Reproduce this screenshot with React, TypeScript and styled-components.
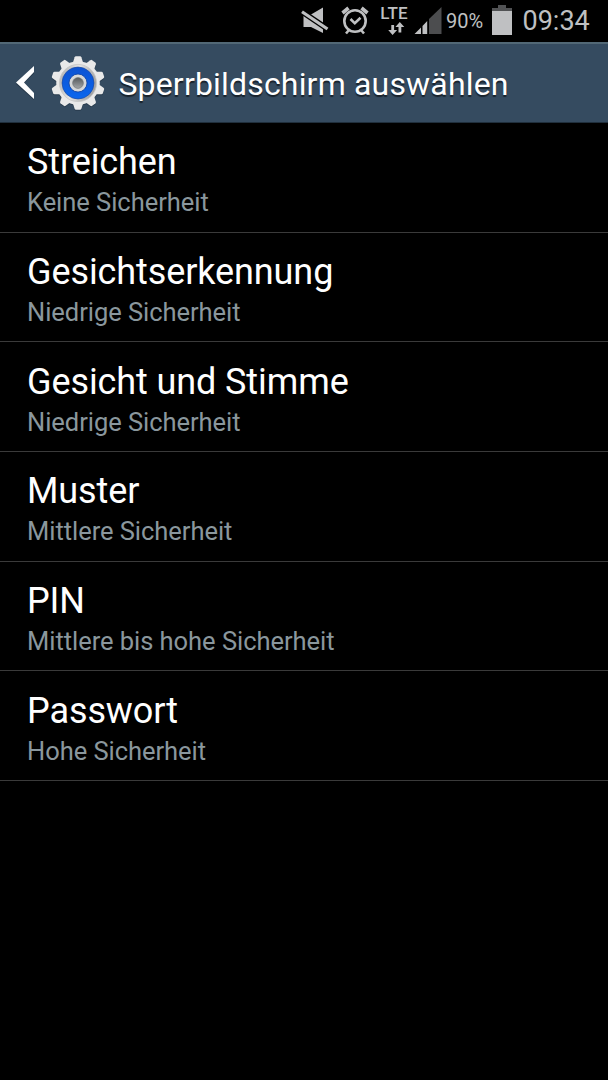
import React from 'react';
import styled, { createGlobalStyle } from 'styled-components';

const Global = createGlobalStyle`
  * { box-sizing: border-box; }
  body { margin: 0; background: #000; font-family: Roboto, "Noto Sans", sans-serif; }
`;
const Screen = styled.div`
  width: 608px; height: 1080px; overflow: hidden; background: #000; color: #fff;
`;
const StatusBar = styled.header`
  display: flex; align-items: flex-start; height: 42px; padding-left: 300px; color: #bfc0c2;
`;
const StatusIcon = styled.svg<{ $w: number; $gap?: number }>`
  display: block; flex: none; width: ${p => p.$w}px; height: 42px; margin-left: ${p => p.$gap ?? 0}px;
`;
const Network = styled.div`
  width: 36px; display: flex; flex-direction: column; align-items: center; padding-top: 5px;
  font-size: 17px; line-height: 17px; font-weight: 500; letter-spacing: 0.1px; margin-left: 5px;
`;
const Arrows = styled.svg`display: block; width: 18px; height: 14px; margin-left: 4px;`;
const Battery = styled.span`font-size: 20px; line-height: 43px; margin-left: 4px; width: 41px; white-space: nowrap;`;
const Clock = styled.span`font-size: 27px; line-height: 43px; margin-left: 9.5px; white-space: nowrap;`;
const TitleBar = styled.div`
  display: flex; align-items: center; height: 81px; background: #354b60;
  border-top: 2px solid #526876; border-bottom: 1px solid #202f3c;
`;
const BackIcon = styled.svg`display: block; width: 36px; height: 78px; margin-left: 4px;`;
const GearIcon = styled.svg`display: block; width: 60px; height: 60px; margin-left: 8px;`;
const Title = styled.h1`
  margin: 2px 0 0 10.4px; font-size: 32px; line-height: 40px; font-weight: 370; letter-spacing: 0.18px;
  text-shadow: 0 2px 1px rgba(0,0,0,.55); white-space: nowrap;
`;
const List = styled.ul`margin: 0; padding: 0; list-style: none;`;
const Item = styled.li`
  height: 109.7px; padding: 18.2px 28px 0 27px; border-bottom: 1px solid #3a3a3a;
`;
const Name = styled.div`font-size: 36px; line-height: 42px; font-weight: 370; letter-spacing: -0.1px; white-space: nowrap;`;
const Note = styled.div`font-size: 25.500px; line-height: 38px; font-weight: 370; letter-spacing: -0.04px; color: #8a979d; white-space: nowrap;`;

const options = [
  ['Streichen', 'Keine Sicherheit'],
  ['Gesichtserkennung', 'Niedrige Sicherheit'],
  ['Gesicht und Stimme', 'Niedrige Sicherheit'],
  ['Muster', 'Mittlere Sicherheit'],
  ['PIN', 'Mittlere bis hohe Sicherheit'],
  ['Passwort', 'Hohe Sicherheit'],
];

const TEETH = Array.from({ length: 10 }, (_, i) => i * 36);
const TOOTH = 'M-5.200-20L-3.400-25.700Q-3-26.800-2-26.800H2Q3-26.800 3.400-25.700L5.200-20z';

function Gear() {
  return (
    <GearIcon viewBox="-30 -30 60 60">
      <defs>
        <linearGradient id="dish" x1="0" y1="0" x2="1" y2="0.3">
          <stop offset="0" stopColor="#a9a9a9" /><stop offset="0.5" stopColor="#e4e4e4" /><stop offset="1" stopColor="#a4a4a4" />
        </linearGradient>
        <linearGradient id="blue" x1="0" y1="0" x2="0" y2="1">
          <stop offset="0" stopColor="#0c52d2" /><stop offset="1" stopColor="#0a66ee" />
        </linearGradient>
        <linearGradient id="hole" x1="0" y1="0" x2="0" y2="1">
          <stop offset="0" stopColor="#55595c" /><stop offset="1" stopColor="#a3a6a8" />
        </linearGradient>
      </defs>
      <g transform="translate(0 1)" fill="#1d2c3a" opacity="0.5">
        <circle r="21.800" />
        {TEETH.map(a => <path key={a} d={TOOTH} transform={`rotate(${a})`} />)}
      </g>
      <g fill="#e9e9e9">
        <circle r="21.800" />
        {TEETH.map(a => <path key={a} d={TOOTH} transform={`rotate(${a})`} />)}
      </g>
      <circle r="18.600" fill="url(#dish)" stroke="#c6c6c6" strokeWidth="0.8" />
      <circle r="16" fill="url(#blue)" stroke="#1c4596" strokeWidth="0.6" />
      <circle r="9" fill="#d5d7d9" stroke="#0b3f9f" strokeWidth="0.8" />
      <circle r="5.400" fill="url(#hole)" stroke="#6a6e71" strokeWidth="0.6" />
    </GearIcon>
  );
}

export default function App() {
  return (
    <Screen>
      <Global />
      <StatusBar>
        <StatusIcon $w={32} viewBox="300 0 32 42" fill="#bfc0c2">
          <path d="M303.500 14.500h7.500l12-7v25.500l-12-6h-7.500z" />
          <path d="M300 10.300l30 20.400" stroke="#000" strokeWidth="5.800" />
          <path d="M302 11.700l25.500 17.300" stroke="#bfc0c2" strokeWidth="3.200" />
        </StatusIcon>
        <StatusIcon $w={32} $gap={7} viewBox="339 0 32 42" fill="none" stroke="#bfc0c2">
          <circle cx="355" cy="21" r="10.700" strokeWidth="2.600" />
          <path d="M350.500 19l4.300 4.300 5.700-5.500M349 30l-3 3.500M361 30l3 3.500" strokeWidth="2.600" />
          <path d="M342.500 13l6-5M361.500 8l6 5" strokeWidth="3.600" />
        </StatusIcon>
        <Network>
          LTE
          <Arrows viewBox="386.500 22 18 14" fill="#bfc0c2">
            <path d="M390.800 25h2.800v5h3l-4.500 5-4.400-5h3.100z" />
            <path d="M398 32.500h2.800v-5.500h3l-4.500-5-4.400 5h3.100z" />
          </Arrows>
        </Network>
        <StatusIcon $w={28} $gap={2} viewBox="414 0 28 42">
          <path d="M429 19L441.500 7v27H429z" fill="#4c4d4f" />
          <path d="M414.500 34l6.500-6.500V34zM422.500 26l4.700-5v13h-4.700z" fill="#bfc0c2" />
        </StatusIcon>
        <Battery>90%</Battery>
        <StatusIcon $w={22} $gap={4} viewBox="491 0 22 42">
          <path d="M498 5h8v3h6v3h-20V8h6z" fill="#515254" /><path d="M492 11h20v24h-20z" fill="#bfc0c2" />
        </StatusIcon>
        <Clock>09:34</Clock>
      </StatusBar>
      <TitleBar>
        <BackIcon viewBox="4 44 36 78">
          <path d="M34 67.500v6l-10 9.500 10 10.500v6.500L16 84z" fill="#1d2c3a" opacity="0.6" />
          <path d="M34 66v6l-10 10.500 10 10.500v6L16 82.500z" fill="#fff" />
        </BackIcon>
        <Gear />
        <Title>Sperrbildschirm auswählen</Title>
      </TitleBar>
      <List>
        {options.map(([name, note]) => (
          <Item key={name}><Name>{name}</Name><Note>{note}</Note></Item>
        ))}
      </List>
    </Screen>
  );
}
